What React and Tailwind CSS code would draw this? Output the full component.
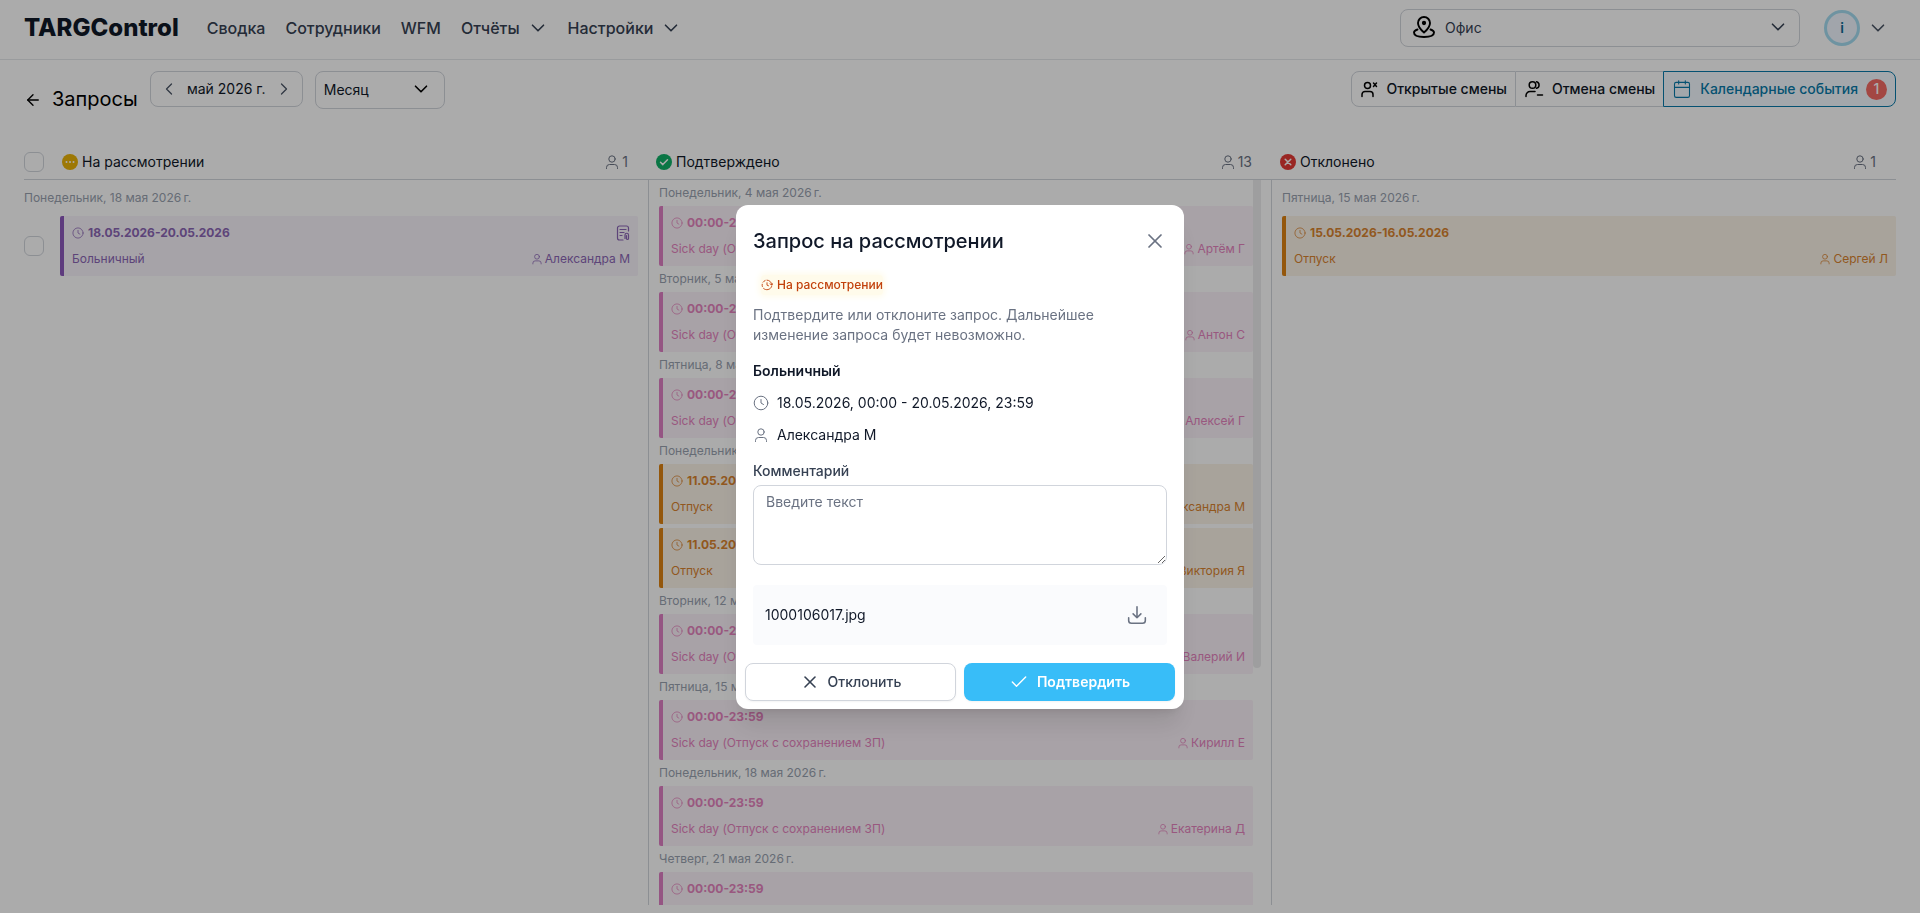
import React from 'react';
import { LuArrowLeft, LuCalendar, LuCheck, LuChevronLeft, LuChevronRight, LuX } from 'react-icons/lu';

const SICK_DAY = 'Sick day (Отпуск с сохранением ЗП)';

const tones = {
  pink: { bar: 'border-[#df7fc4]', bg: 'bg-[#fbf2f9]', text: 'text-[#e583be]' },
  orange: { bar: 'border-[#dd8213]', bg: 'bg-[#fbf3e8]', text: 'text-[#d9832f]' },
  purple: { bar: 'border-[#8c58bc]', bg: 'bg-[#f8f3fb]', text: 'text-[#8b66b5]' },
};

// \u202f is the narrow no-break space of the ru locale
const approved = [
  { date: 'Понедельник, 4 мая 2026\u202fг.', items: [{ time: '00:00-23:59', type: SICK_DAY, name: 'Артём Г', tone: 'pink' }] },
  { date: 'Вторник, 5 мая 2026\u202fг.', items: [{ time: '00:00-23:59', type: SICK_DAY, name: 'Антон С', tone: 'pink' }] },
  { date: 'Пятница, 8 мая 2026\u202fг.', items: [{ time: '00:00-23:59', type: SICK_DAY, name: 'Алексей Г', tone: 'pink' }] },
  {
    date: 'Понедельник, 11 мая 2026\u202fг.',
    items: [
      { time: '11.05.2026-17.05.2026', type: 'Отпуск', name: 'Александра М', tone: 'orange' },
      { time: '11.05.2026-17.05.2026', type: 'Отпуск', name: 'Виктория Я', tone: 'orange' },
    ],
  },
  { date: 'Вторник, 12 мая 2026\u202fг.', items: [{ time: '00:00-23:59', type: SICK_DAY, name: 'Валерий И', tone: 'pink' }] },
  { date: 'Пятница, 15 мая 2026\u202fг.', items: [{ time: '00:00-23:59', type: SICK_DAY, name: 'Кирилл Е', tone: 'pink' }] },
  { date: 'Понедельник, 18 мая 2026\u202fг.', items: [{ time: '00:00-23:59', type: SICK_DAY, name: 'Екатерина Д', tone: 'pink' }] },
  { date: 'Четверг, 21 мая 2026\u202fг.', items: [{ time: '00:00-23:59', tone: 'pink' }] },
];

const ChevronDown = ({ className = '' }) => (
  <svg viewBox="0 0 20 20" fill="none" stroke="currentColor" strokeWidth="1.6" strokeLinecap="round" strokeLinejoin="round" className={`size-5 ${className}`}>
    <path d="m4.500 7.200 5.500 5.600 5.500-5.600" />
  </svg>
);

const UserIcon = ({ className }) => (
  <svg viewBox="0 0 16 16" fill="none" stroke="currentColor" strokeLinecap="round" className={className}>
    <circle cx="8" cy="5" r="3.200" />
    <path d="M2.500 14.500v-1a3 3 0 0 1 3-3h5a3 3 0 0 1 3 3v1" />
  </svg>
);

const ClockIcon = ({ className }) => (
  <svg viewBox="0 0 16 16" fill="none" stroke="currentColor" strokeLinecap="round" className={className}>
    <circle cx="8" cy="8" r="6.800" />
    <path d="M8 4.500V8l2.500 1.500" />
  </svg>
);

const PendingIcon = ({ className }) => (
  <svg viewBox="0 0 16 16" fill="none" stroke="currentColor" strokeWidth="1.200" strokeLinecap="round" className={className}>
    <path d="M8 1.500A6.500 6.500 0 0 1 14.500 8M14.200 10A6.500 6.500 0 0 1 3.400 12.600M1.800 10A6.500 6.500 0 0 1 1.600 7M2.800 4.200A6.500 6.500 0 0 1 5.500 2M12 6.500 14.500 8 16 5.800M8 5v3.200l2 .8" />
  </svg>
);

const DownloadIcon = ({ className }) => (
  <svg viewBox="0 0 18 18" fill="none" stroke="currentColor" strokeWidth="1.4" strokeLinecap="round" strokeLinejoin="round" className={className}>
    <path d="M9 1.500v10M5.500 8 9 11.500 12.500 8M1.500 11.500v2.500a2.500 2.500 0 0 0 2.500 2.500h10a2.500 2.500 0 0 0 2.500-2.500v-2.500" />
  </svg>
);

const LocationIcon = ({ className }) => (
  <svg viewBox="0 0 24 24" fill="none" stroke="currentColor" strokeWidth="1.9" strokeLinecap="round" strokeLinejoin="round" className={className}>
    <path d="M12 17.500S6 12.500 6 8a6 6 0 0 1 12 0c0 4.500-6 9.500-6 9.500Z" />
    <circle cx="12" cy="8" r="1.200" fill="currentColor" />
    <path d="M5.500 14.500C3.200 15.300 2 16.300 2 17.500 2 20.300 6.300 22 12 22s10-1.700 10-4.500c0-1.200-1.200-2.200-3.500-3" />
  </svg>
);

const UserCrossIcon = ({ className }) => (
  <svg viewBox="0 0 18 18" fill="none" stroke="currentColor" strokeWidth="1.500" strokeLinecap="round" className={className}>
    <circle cx="7.500" cy="5.500" r="3" />
    <path d="M2 16.500v-2a3 3 0 0 1 3-3h5a3 3 0 0 1 3 3v2M13.500 3l3 3.500M16.500 3l-3 3.500" />
  </svg>
);

const UsersMinusIcon = ({ className }) => (
  <svg viewBox="0 0 20 18" fill="none" stroke="currentColor" strokeWidth="1.500" strokeLinecap="round" className={className}>
    <circle cx="8.500" cy="5" r="3.300" />
    <path d="M2 16.500V15.500a4 4 0 0 1 4-4H11M12.500 1.700a3.400 3.400 0 0 1 0 6.600M13.500 15h5" />
  </svg>
);

const NoteIcon = ({ className }) => (
  <svg viewBox="0 0 14 16" fill="none" stroke="currentColor" strokeWidth="1.200" strokeLinecap="round" className={className}>
    <path d="M12.500 6V3a2 2 0 0 0-2-2h-7a2 2 0 0 0-2 2v10a2 2 0 0 0 2 2H7M4 4.500h6M4 7.500h4M4 10.500h2" />
    <path d="M9 13.500V10a1.700 1.700 0 0 1 3.500 0v3.500a1 1 0 0 1-2 0V10.500" />
  </svg>
);

const StatusIcon = ({ status }) => {
  if (status === 'pending') {
    return (
      <svg viewBox="0 0 16 16" className="size-4">
        <circle cx="8" cy="8" r="8" fill="#eab308" />
        <g fill="#fff">
          <circle cx="4.500" cy="8" r="1" />
          <circle cx="8" cy="8" r="1" />
          <circle cx="11.500" cy="8" r="1" />
        </g>
      </svg>
    );
  }
  return (
    <svg viewBox="0 0 16 16" className="size-4" fill="none" stroke="#fff" strokeWidth="1.500" strokeLinecap="round" strokeLinejoin="round">
      <circle cx="8" cy="8" r="8" fill={status === 'approved' ? '#10b068' : '#e53935'} stroke="none" />
      <path d={status === 'approved' ? 'm4.500 8.300 2.300 2.300 4.700-4.900' : 'm5.200 5.200 5.600 5.600M10.800 5.200l-5.600 5.600'} />
    </svg>
  );
};

const Checkbox = ({ label }) => (
  <input
    type="checkbox"
    aria-label={label}
    className="size-5 shrink-0 appearance-none rounded-md border border-gray-300 bg-white"
  />
);

const EventCard = ({ time, type, name, tone, note }) => {
  const { bar, bg, text } = tones[tone];
  return (
    <article className={`flex h-15 w-full min-w-0 flex-col justify-between rounded-xs border-l-4 px-2 py-[9px] text-xs ${bar} ${bg} ${text}`}>
      <div className="flex h-4 items-center justify-between">
        <span className="flex items-center gap-1 font-bold">
          <ClockIcon className="size-3" />
          {time}
        </span>
        {note && <NoteIcon className="h-4 w-3.5" />}
      </div>
      {name && (
        <div className="flex h-4 items-center justify-between">
          <span>{type}</span>
          <span className="flex items-center gap-0.5">
            <UserIcon className="size-3" />
            {name}
          </span>
        </div>
      )}
    </article>
  );
};

const ColumnHeader = ({ status, title, count }) => (
  <div className="flex flex-1 items-center gap-1 pr-5 pl-2">
    <StatusIcon status={status} />
    <h2 className="text-sm text-gray-900">{title}</h2>
    <span className="ml-auto flex items-center gap-0.5 text-sm text-gray-500">
      <UserIcon className="size-4" />
      {count}
    </span>
  </div>
);

const navLinks = ['Сводка', 'Сотрудники', 'WFM'];
const navMenus = ['Отчёты', 'Настройки'];

const Header = () => (
  <header className="flex h-15 shrink-0 items-center border-b border-gray-200 pr-8 pb-1 pl-6">
    <a href="#" className="text-2xl font-extrabold text-gray-900">TARGControl</a>
    <nav className="ml-7 flex items-center gap-5 text-base font-medium text-gray-700">
      {navLinks.map((link) => (
        <a key={link} href="#">{link}</a>
      ))}
      {navMenus.map((menu) => (
        <button key={menu} type="button" className="flex items-center gap-2">
          {menu}
          <ChevronDown />
        </button>
      ))}
    </nav>
    <div className="ml-auto flex items-center gap-6">
      <div className="relative">
        <LocationIcon className="absolute top-1.5 left-3 size-6 text-black" />
        <select aria-label="Локация" className="h-9.5 w-100 appearance-none rounded-lg border border-gray-300 bg-white pl-11 text-sm text-gray-700">
          <option>Офис</option>
        </select>
        <ChevronDown className="pointer-events-none absolute top-2 right-3 text-gray-700" />
      </div>
      <button type="button" className="flex items-center gap-2 text-gray-600">
        <span className="flex size-9 items-center justify-center rounded-full border-3 border-[#a5dcf0] bg-[#f0f6ff] text-sm font-semibold text-[#0c6a94]">i</span>
        <ChevronDown />
      </button>
    </div>
  </header>
);

const Toolbar = () => (
  <div className="flex items-start px-6 pt-[11px]">
    <a href="#" aria-label="Назад" className="mt-5 text-black">
      <LuArrowLeft size={18} strokeWidth={1.8} />
    </a>
    <h1 className="mt-3 ml-2.5 text-xl leading-8 text-black">Запросы</h1>
    <div className="ml-3 flex h-9 w-[153px] items-center justify-between rounded-lg border border-gray-300 px-2 text-gray-900">
      <button type="button" aria-label="Предыдущий месяц" className="text-gray-600">
        <LuChevronLeft size={20} strokeWidth={1.5} />
      </button>
      <span className="text-sm">май 2026 г.</span>
      <button type="button" aria-label="Следующий месяц" className="text-gray-600">
        <LuChevronRight size={20} strokeWidth={1.5} />
      </button>
    </div>
    <div className="relative ml-3">
      <select aria-label="Период" className="h-9.5 w-32.5 appearance-none rounded-lg border border-gray-300 bg-white pl-2 text-sm text-gray-900">
        <option>Месяц</option>
      </select>
      <ChevronDown className="pointer-events-none absolute top-2 right-3.5" />
    </div>
    <div className="ml-auto flex h-9 text-sm font-medium text-gray-900">
      <button type="button" className="flex items-center gap-2 rounded-l-lg border border-gray-300 px-2">
        <UserCrossIcon className="size-4.5 text-black" />
        Открытые смены
      </button>
      <button type="button" className="flex items-center gap-2 border-y border-gray-300 px-2">
        <UsersMinusIcon className="size-5 text-black" />
        Отмена смены
      </button>
      <button type="button" className="flex items-center gap-2 rounded-r-lg border border-[#087aaa] bg-[#f4faff] px-2 text-[#087aaa]">
        <LuCalendar size={20} strokeWidth={1.3} />
        Календарные события
        <span className="flex size-[21px] items-center justify-center rounded-full bg-[#f36b64] text-sm text-white">1</span>
      </button>
    </div>
  </div>
);

const Board = () => (
  <main className="mx-6 mt-7.5 mb-2 flex min-h-0 flex-1 flex-col">
    <div className="grid h-[35px] shrink-0 grid-cols-3 border-b border-gray-300">
      <div className="flex items-center gap-2.5">
        <Checkbox label="Выбрать все" />
        <ColumnHeader status="pending" title="На рассмотрении" count={1} />
      </div>
      <ColumnHeader status="approved" title="Подтверждено" count={13} />
      <ColumnHeader status="rejected" title="Отклонено" count={1} />
    </div>

    <div className="grid min-h-0 flex-1 grid-cols-3">
      <section className="pr-2.5">
        <h3 className="py-2.5 text-xs leading-4 text-gray-400">Понедельник, 18 мая 2026{'\u202f'}г.</h3>
        <div className="flex items-center gap-4">
          <Checkbox label="Выбрать запрос" />
          <EventCard time="18.05.2026-20.05.2026" type="Больничный" name="Александра М" tone="purple" note />
        </div>
      </section>

      <section className="flex min-h-0 overflow-hidden border-x border-gray-300 px-2.5">
        <div className="min-w-0 flex-1">
          {approved.map(({ date, items }) => (
            <div key={date}>
              <h3 className="py-1 text-xs leading-4.5 text-gray-400">{date}</h3>
              <div className="flex flex-col gap-1">
                {items.map((item, index) => (
                  <EventCard key={index} {...item} />
                ))}
              </div>
            </div>
          ))}
        </div>
        <div className="h-122 w-2 shrink-0 rounded-b bg-[#ececee]" />
      </section>

      <section className="pl-2.5">
        <h3 className="py-2.5 text-xs leading-4 text-gray-400">Пятница, 15 мая 2026{'\u202f'}г.</h3>
        <EventCard time="15.05.2026-16.05.2026" type="Отпуск" name="Сергей Л" tone="orange" />
      </section>
    </div>
  </main>
);

const RequestDialog = () => (
  <div className="fixed inset-0 flex items-center justify-center bg-black/33">
    <div role="dialog" aria-modal="true" aria-labelledby="dialog-title" className="w-full max-w-md rounded-xl bg-white px-[9px] pb-2 shadow-xl">
      <div className="px-2 pt-5">
        <div className="flex items-center justify-between">
          <h2 id="dialog-title" className="text-xl leading-8 font-medium text-gray-900">Запрос на рассмотрении</h2>
          <button type="button" aria-label="Закрыть" className="text-gray-500">
            <LuX size={24} strokeWidth={1.7} />
          </button>
        </div>

        <span className="mt-4.5 ml-2 inline-flex h-5 items-center gap-1 rounded bg-[#fffbeb] text-xs font-medium text-[#c2410c] shadow-[0_0_6px_2px_#fffbeb]">
          <PendingIcon className="size-3" />
          На рассмотрении
        </span>
        <p className="mt-2 pr-12 text-sm leading-5 text-gray-500">
          Подтвердите или отклоните запрос. Дальнейшее изменение запроса будет невозможно.
        </p>
        <h3 className="mt-4 text-sm leading-5 font-semibold text-gray-900">Больничный</h3>
        <div className="mt-3 flex items-center gap-2 text-sm leading-5 text-gray-900">
          <ClockIcon className="size-4 text-gray-500" />
          18.05.2026, 00:00 - 20.05.2026, 23:59
        </div>
        <div className="mt-3 flex items-center gap-2 text-sm leading-5 text-gray-900">
          <UserIcon className="size-4 text-gray-500" />
          Александра М
        </div>

        <label htmlFor="comment" className="mt-4 block text-sm leading-5 font-medium text-gray-700">Комментарий</label>
        <textarea
          id="comment"
          placeholder="Введите текст"
          className="mt-1 block h-20 w-full resize-y rounded-lg border border-gray-300 px-3 py-1.5 text-sm leading-5 placeholder:text-gray-500"
        />
        <div className="mt-5 flex h-15 items-center justify-between rounded bg-[#fafbfd] pr-5 pl-3 text-sm text-gray-900">
          1000106017.jpg
          <button type="button" aria-label="Скачать" className="text-gray-500">
            <DownloadIcon className="size-5" />
          </button>
        </div>
      </div>

      <div className="mt-4.5 grid grid-cols-2 gap-2 text-sm font-medium">
        <button type="button" className="flex h-9.5 items-center justify-center gap-2 rounded-lg border border-gray-300 bg-white text-gray-700 shadow-xs">
          <LuX size={20} strokeWidth={1.9} />
          Отклонить
        </button>
        <button type="button" className="flex h-9.5 items-center justify-center gap-2 rounded-lg bg-[#38bdf8] font-semibold text-white shadow-xs">
          <LuCheck size={20} strokeWidth={1.7} />
          Подтвердить
        </button>
      </div>
    </div>
  </div>
);

const App = () => (
  <div className="flex h-screen flex-col overflow-hidden bg-white font-['Inter',sans-serif]">
    <Header />
    <Toolbar />
    <Board />
    <RequestDialog />
  </div>
);

export default App;
